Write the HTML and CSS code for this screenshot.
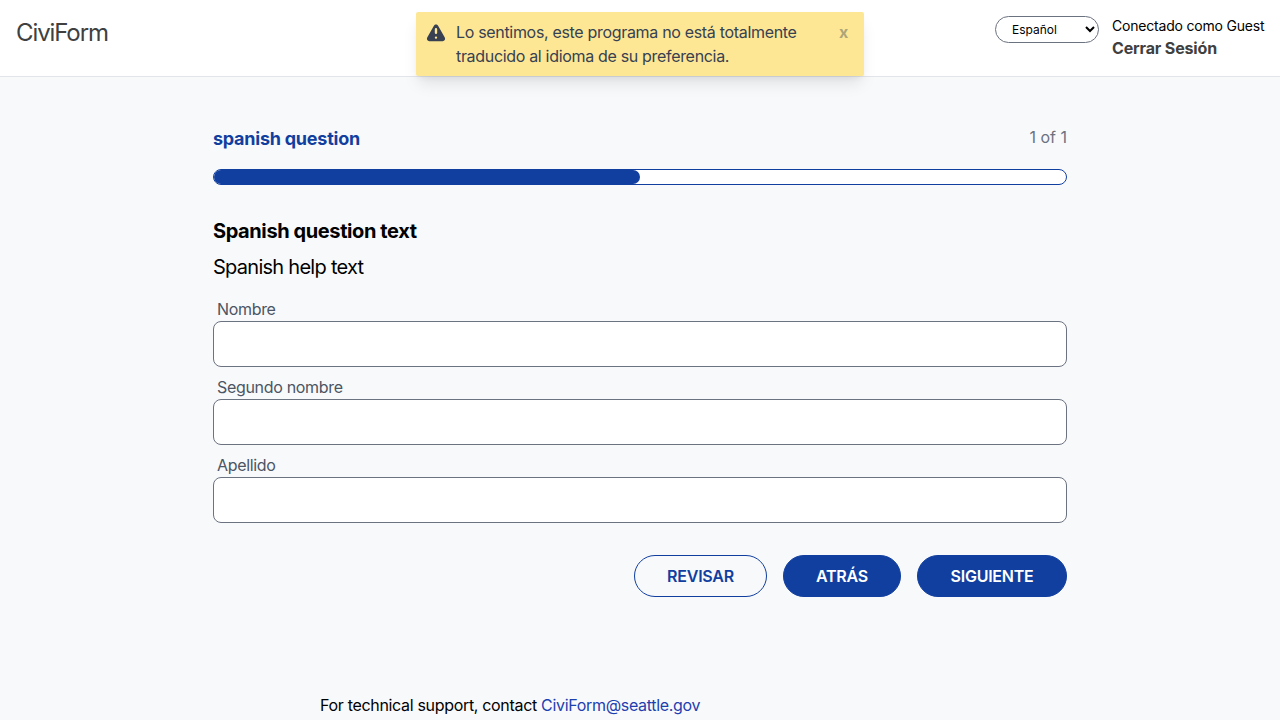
FILE: index.html
```html
<!DOCTYPE html>
<html lang="es">
<head>
<meta charset="utf-8">
<title>CiviForm</title>
<link rel="stylesheet" href="styles.css">
</head>
<body>
<header class="navbar">
  <div class="brand">CiviForm</div>
  <div class="account">
    <select class="language" aria-label="Idioma"><option>Español</option></select>
    <div class="session">
      <div class="user">Conectado como Guest</div>
      <a class="logout">Cerrar Sesión</a>
    </div>
  </div>
</header>
<div class="toast" role="alert">
  <svg class="toast-icon" viewBox="0 0 20 20" fill="currentColor"><path fill-rule="evenodd" d="M8.257 3.099c.765-1.36 2.722-1.36 3.486 0l5.58 9.92c.75 1.334-.213 2.98-1.742 2.98H4.42c-1.53 0-2.493-1.646-1.743-2.98l5.58-9.92zM11 13a1 1 0 11-2 0 1 1 0 012 0zm-1-8a1 1 0 00-1 1v3a1 1 0 002 0V6a1 1 0 00-1-1z" clip-rule="evenodd"/></svg>
  <div class="toast-text">Lo sentimos, este programa no está totalmente <br>traducido al idioma de su preferencia.</div>
  <div class="toast-close">x</div>
</div>
<main class="content">
  <div class="progress-head">
    <h2 class="program">spanish question</h2>
    <span class="step">1 of 1</span>
  </div>
  <div class="progress"><div class="progress-fill" style="width: 50%"></div></div>
  <form class="question">
    <h1 class="question-text">Spanish question text</h1>
    <p class="help-text">Spanish help text</p>
    <label class="field"><span class="label">Nombre</span><input class="input" type="text"></label>
    <label class="field"><span class="label">Segundo nombre</span><input class="input" type="text"></label>
    <label class="field"><span class="label">Apellido</span><input class="input" type="text"></label>
    <div class="actions">
      <a class="button button-outline">REVISAR</a>
      <a class="button button-back">ATRÁS</a>
      <button class="button button-next" type="button">SIGUIENTE</button>
    </div>
  </form>
</main>
<footer class="support"><span class="support-text">For technical support, contact</span> <a class="support-link">CiviForm@seattle.gov</a></footer>
</body>
</html>
```
FILE: styles.css
```css
* { box-sizing: border-box; margin: 0; }
body {
  height: 720px;
  overflow: hidden;
  background: #f8f9fb;
  color: #000;
  font: 16px/24px Inter, "Liberation Sans", sans-serif;
  letter-spacing: -0.32px;
}
.navbar {
  display: flex;
  justify-content: space-between;
  height: 77px;
  padding: 16px;
  background: #fff;
  border-bottom: 1px solid #e2e5e9;
}
.brand { padding-top: 1px; font-size: 24px; line-height: 32px; color: #404040; letter-spacing: -1.1px; }
.account { display: flex; gap: 13px; }
.language {
  width: 104px;
  height: 27px;
  padding: 0 0 0 12px;
  border: 1px solid #6b7280;
  border-radius: 14px;
  background: #fff;
  color: #000;
  font: 12px/16px Inter, sans-serif;
  letter-spacing: 0;
}
.session { width: 152px; white-space: nowrap; }
.user { font-size: 14px; line-height: 20px; letter-spacing: -0.2px; }
.logout { display: block; font-weight: 700; color: #404040; letter-spacing: -0.15px; }
.toast {
  position: absolute;
  top: 12px;
  left: 416px;
  display: flex;
  width: 448px;
  height: 64px;
  padding: 8px;
  border-radius: 2px;
  background: #fde795;
  color: #374151;
  white-space: nowrap;
  box-shadow: 0 10px 15px -3px rgba(0, 0, 0, .1), 0 4px 6px -2px rgba(0, 0, 0, .05);
}
.toast-icon { width: 24px; height: 24px; margin-top: 2px; }
.toast-text { flex: 1; padding-left: 8px; }
.toast-close { width: 25px; text-align: center; font-weight: 700; opacity: .4; }
.content { width: 854px; margin: 0 auto; padding-top: 48px; }
.progress-head { display: flex; justify-content: space-between; height: 28px; }
.program { font-size: 18px; line-height: 28px; color: #113f9f; letter-spacing: -0.24px; }
.step { color: #6b7280; letter-spacing: 0; }
.progress {
  height: 16px;
  margin-top: 16px;
  border: 1px solid #113f9f;
  border-radius: 8px;
  background: #fff;
  overflow: hidden;
}
.progress-fill { height: 100%; background: #113f9f; border-radius: 0 8px 8px 0; }
.question { padding-top: 32px; }
.question-text { font-size: 20px; line-height: 28px; letter-spacing: -0.4px; }
.help-text { margin: 8px 0 16px; font-size: 20px; line-height: 28px; letter-spacing: -0.73px; }
.field { display: block; margin-bottom: 8px; }
.label { display: block; padding-left: 4px; color: #4b5563; }
.input {
  display: block;
  width: 100%;
  height: 46px;
  padding: 8px 12px;
  border: 1px solid #6b7280;
  border-radius: 8px;
  background: #fff;
}
.actions { display: flex; justify-content: flex-end; gap: 16px; padding-top: 24px; }
.button {
  display: flex;
  align-items: center;
  justify-content: center;
  height: 42px;
  border: 1px solid #113f9f;
  border-radius: 21px;
  background: #113f9f;
  color: #fff;
  font: 600 16px/24px Inter, sans-serif;
  letter-spacing: -0.25px;
}
.button-outline { width: 133px; background: #f8f9fb; color: #113f9f; }
.button-back { width: 118px; }
.button-next { width: 150px; }
.support { margin: 96px 0 0 320px; }
.support-link { color: #1e40af; }
```
